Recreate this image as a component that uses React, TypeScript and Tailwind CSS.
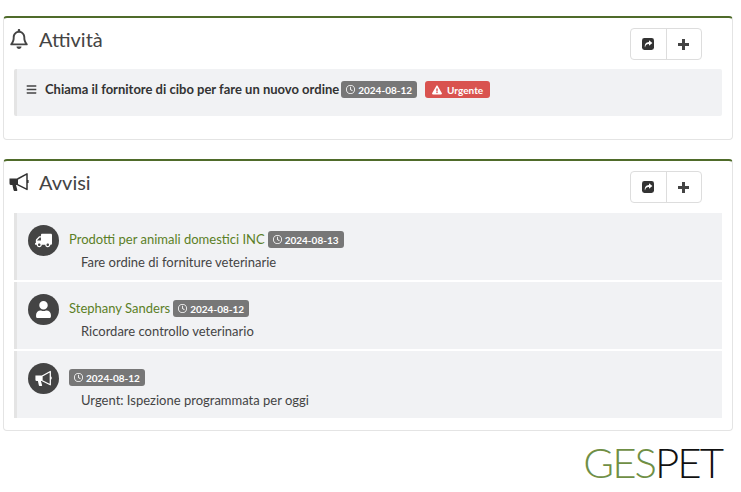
import React from 'react';
import { FaBars, FaExclamationTriangle, FaTruck, FaUser } from 'react-icons/fa';
import { FaRegBell, FaRegClock } from 'react-icons/fa6';

function BullhornIcon({ className }: { className?: string }) {
  return (
    <svg viewBox="0 0 20 20" className={className} fill="currentColor">
      <path d="M0.5 6.5H9v6.5H7l1.4 5.2-.5.7H5.2l-.6-.7L3.4 13H2A1.5 1.5 0 0 1 .5 11.5V6.5z" />
      <path d="M8.5 7 18 1.8v15.6L8.5 12.6" fill="none" stroke="currentColor" strokeWidth="1.5" strokeLinejoin="round" />
      <path d="M18 8h1.6v3H18z" />
    </svg>
  );
}

function ShareSquareIcon({ className }: { className?: string }) {
  return (
    <svg viewBox="0 0 12 12" className={className}>
      <rect width="12" height="12" rx="2.4" fill="#333333" />
      <path d="M7 2.2 10.4 5 7 7.8V6.1C5 6 3.6 6.8 3 9.6 2.2 6.6 3.8 4 7 3.9V2.2z" fill="#ffffff" />
    </svg>
  );
}

function PlusIcon({ className }: { className?: string }) {
  return (
    <svg viewBox="0 0 11 11" className={className} fill="currentColor">
      <path d="M4 0h3v4h4v3H7v4H4V7H0V4h4z" />
    </svg>
  );
}

function DateBadge({ date }: { date: string }) {
  return (
    <span className="inline-flex h-[17px] items-center gap-[3px] rounded-[3px] bg-[#777777] px-[5px] text-[10px] font-bold leading-none text-white">
      <FaRegClock className="h-[9px] w-[9px]" />
      {date}
    </span>
  );
}

function ToolButtons() {
  return (
    <div className="mr-[30px] mt-[10px] flex h-[32px] w-[72px] rounded-[4px] border border-[#dddddd] text-[#444444]">
      <div className="flex flex-1 items-center justify-center border-r border-[#dddddd]">
        <ShareSquareIcon className="h-[12px] w-[12px]" />
      </div>
      <div className="flex flex-1 items-center justify-center">
        <PlusIcon className="h-[11px] w-[11px]" />
      </div>
    </div>
  );
}

const notices = [
  { icon: FaTruck, flip: true, name: 'Prodotti per animali domestici INC', date: '2024-08-13', text: 'Fare ordine di forniture veterinarie' },
  { icon: FaUser, flip: false, name: 'Stephany Sanders', date: '2024-08-12', text: 'Ricordare controllo veterinario' },
  { icon: BullhornIcon, flip: false, name: '', date: '2024-08-12', text: 'Urgent: Ispezione programmata per oggi' },
];

export default function App() {
  return (
    <div className="h-[492px] w-[741px] overflow-hidden bg-white pl-[3px] pr-[8px] pt-[16px] text-[13px] text-[#333333] [font-family:Lato,sans-serif]">
      {/* Attivita */}
      <section className="h-[124px] rounded-[4px] border border-t-2 border-[#e4e4e4] border-t-[#4f6b2a]">
        <div className="flex h-[51px] justify-between">
          <div className="flex h-[42px] items-center pl-[5px]">
            <FaRegBell className="h-[20px] w-[20px] text-[#444444]" />
            <h2 className="ml-[10px] text-[20px] leading-none text-[#444444]">Attività</h2>
          </div>
          <ToolButtons />
        </div>
        <div className="mx-[10px] h-[47px] rounded-[2px] border-l-[3px] border-[#e4e4e4] bg-[#f1f2f4] pl-[9px] pt-[11px]">
          <div className="flex items-center font-bold">
            <FaBars className="h-[11px] w-[11px] text-[#444444]" />
            <span className="ml-[8px]">Chiama il fornitore di cibo per fare un nuovo ordine</span>
            <span className="ml-[2px] flex"><DateBadge date="2024-08-12" /></span>
            <span className="ml-[8px] inline-flex h-[17px] items-center gap-[5px] rounded-[3px] bg-[#d9534f] px-[7px] text-[10px] leading-none text-white">
              <FaExclamationTriangle className="h-[10px] w-[10px]" />
              Urgente
            </span>
          </div>
        </div>
      </section>

      {/* Avvisi */}
      <section className="mt-[19px] h-[272px] rounded-[4px] border border-t-2 border-[#e4e4e4] border-t-[#4f6b2a]">
        <div className="flex h-[52px] justify-between">
          <div className="flex h-[42px] items-center pl-[5px]">
            <BullhornIcon className="h-[20px] w-[20px] text-[#333333]" />
            <h2 className="ml-[10px] text-[20px] leading-none text-[#444444]">Avvisi</h2>
          </div>
          <ToolButtons />
        </div>
        <div className="mx-[10px] flex flex-col gap-[2px]">
          {notices.map((n) => {
            const Icon = n.icon;
            return (
              <div key={n.text} className="flex h-[67px] border-l-[3px] border-[#e4e4e4] bg-[#f1f2f4] pl-[11px] pt-[12px]">
                <div className="flex h-[31px] w-[31px] shrink-0 items-center justify-center rounded-full bg-[#444444] text-white">
                  <Icon className={n.flip ? 'h-[17px] w-[17px] -scale-x-100' : 'h-[17px] w-[17px]'} />
                </div>
                <div className="ml-[10px] pt-[6px]">
                  <div className="flex h-[17px] items-center gap-[3px]">
                    {n.name && <span className="text-[#5b7f26]">{n.name}</span>}
                    <DateBadge date={n.date} />
                  </div>
                  <p className="ml-[12px] mt-[5px] text-[#444444]">{n.text}</p>
                </div>
              </div>
            );
          })}
        </div>
      </section>

      {/* Logo */}
      <div className="mr-[11px] mt-[6px] flex justify-end text-[42px] font-light leading-[50px] tracking-[-2px]">
        <span className="text-[#6f8f45]">GES</span>
        <span className="text-[#111111]">PET</span>
      </div>
    </div>
  );
}
